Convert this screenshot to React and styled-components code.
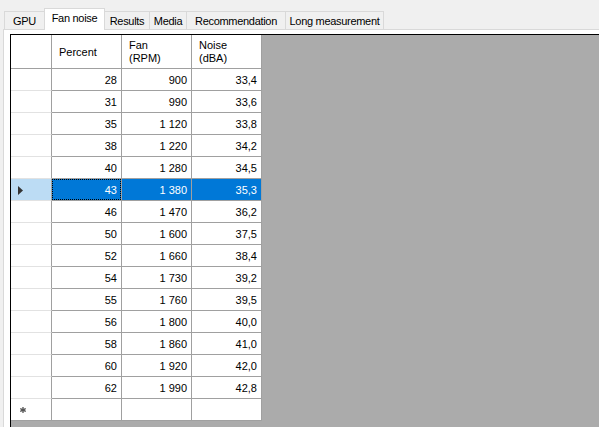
import React from "react";
import styled, { createGlobalStyle, css } from "styled-components";

const GlobalStyle = createGlobalStyle`
  html, body {
    margin: 0;
    padding: 0;
    background: #f0f0f0;
  }
  body {
    font-family: "Liberation Sans", Arial, sans-serif;
  }
`;

//Data
const tabs = [
  { label: "GPU", width: 41 },
  { label: "Fan noise", width: 61, active: true },
  { label: "Results", width: 46 },
  { label: "Media", width: 38 },
  { label: "Recommendation", width: 100 },
  { label: "Long measurement", width: 99 },
];

const rows = [
  [28, "900", "33,4"],
  [31, "990", "33,6"],
  [35, "1 120", "33,8"],
  [38, "1 220", "34,2"],
  [40, "1 280", "34,5"],
  [43, "1 380", "35,3"],
  [46, "1 470", "36,2"],
  [50, "1 600", "37,5"],
  [52, "1 660", "38,4"],
  [54, "1 730", "39,2"],
  [55, "1 760", "39,5"],
  [56, "1 800", "40,0"],
  [58, "1 860", "41,0"],
  [60, "1 920", "42,0"],
  [62, "1 990", "42,8"],
];

const SELECTED = 5;

const CurrentRowArrow = () => (
  <svg width="5" height="9" viewBox="0 0 5 9">
    <polygon points="0,0 5,4.5 0,9" fill="#333" />
  </svg>
);

const NewRowGlyph = () => (
  <svg width="6" height="6" viewBox="0 0 6 6">
    <g stroke="#555" strokeWidth="1.4" strokeLinecap="round">
      <line x1="3" y1="0.6" x2="3" y2="5.4" />
      <line x1="0.8" y1="1.8" x2="5.2" y2="4.2" />
      <line x1="0.8" y1="4.2" x2="5.2" y2="1.8" />
    </g>
  </svg>
);

const App = () => {
  return (
    <>
      <GlobalStyle />
      <Window>
        <TabStrip>
          {tabs.map((t) => (
            <Tab key={t.label} $width={t.width} $active={t.active}>
              {t.label}
            </Tab>
          ))}
        </TabStrip>
        <TabPage>
          <GridView>
            <Table>
              <HeaderCell $corner />
              <HeaderCell>Percent</HeaderCell>
              <HeaderCell>{"Fan\n(RPM)"}</HeaderCell>
              <HeaderCell>{"Noise\n(dBA)"}</HeaderCell>
              {rows.map((r, i) => (
                <React.Fragment key={r[0]}>
                  <RowHeader $selected={i === SELECTED}>
                    {i === SELECTED && <CurrentRowArrow />}
                  </RowHeader>
                  {r.map((v, j) => (
                    <Cell
                      key={j}
                      $selected={i === SELECTED}
                      $focused={i === SELECTED && j === 0}
                    >
                      {v}
                    </Cell>
                  ))}
                </React.Fragment>
              ))}
              <RowHeader $newRow>
                <NewRowGlyph />
              </RowHeader>
              <Cell />
              <Cell />
              <Cell />
            </Table>
          </GridView>
        </TabPage>
      </Window>
    </>
  );
};

const Window = styled.div`
  width: 599px;
  height: 427px;
  overflow: hidden;
  display: flex;
  flex-direction: column;
  background: #f0f0f0;
`;

const TabStrip = styled.div`
  height: 29px;
  flex: none;
  display: flex;
  align-items: flex-end;
  padding-left: 4px;
  box-sizing: border-box;
  position: relative;
  z-index: 1;
`;

const Tab = styled.div`
  width: ${(p) => p.$width}px;
  height: 18px;
  box-sizing: border-box;
  border: 1px solid #d9d9d9;
  border-bottom: none;
  margin-left: -1px;
  background: #f0f0f0;
  display: flex;
  align-items: center;
  justify-content: center;
  font-size: 11px;
  letter-spacing: -0.3px;
  color: #000;
  white-space: nowrap;
  padding-top: 1px;
  &:first-child {
    margin-left: 0;
  }
  ${(p) =>
    p.$active &&
    css`
      height: 22px;
      margin-bottom: -1px;
      background: #fff;
      padding-top: 0;
      padding-bottom: 3px;
      position: relative;
      z-index: 2;
    `}
`;

const TabPage = styled.div`
  flex: 1;
  display: flex;
  margin-left: 3px;
  border-top: 1px solid #d9d9d9;
  border-left: 1px solid #d9d9d9;
  background: #fff;
  padding: 4px 0 0 6px;
  min-height: 0;
`;

const GridView = styled.div`
  flex: 1;
  background: #ababab;
  border-left: 1px solid #000;
  border-top: 1px solid #000;
  overflow: hidden;
`;

const Table = styled.div`
  display: grid;
  grid-template-columns: 41px 70px 70px 70px;
  width: max-content;
  font-size: 11px;
  color: #000;
`;

const HeaderCell = styled.div`
  height: 34px;
  box-sizing: border-box;
  background: #fff;
  border-right: 1px solid #a0a0a0;
  border-bottom: 1px solid #a0a0a0;
  display: flex;
  align-items: center;
  padding: 1px 0 0 7px;
  line-height: 13px;
  white-space: pre-line;
`;

const RowHeader = styled.div`
  height: 22px;
  box-sizing: border-box;
  background: ${(p) => (p.$selected ? "#bcdcf4" : "#fff")};
  border-right: 1px solid #a0a0a0;
  border-bottom: 1px solid ${(p) => (p.$newRow ? "#a0a0a0" : "#e2e2e2")};
  display: flex;
  align-items: center;
  padding-left: ${(p) => (p.$newRow ? 9 : 7)}px;
  padding-top: 1px;
`;

const Cell = styled.div`
  height: 22px;
  box-sizing: border-box;
  position: relative;
  background: ${(p) => (p.$selected ? "#0078d7" : "#fff")};
  color: ${(p) => (p.$selected ? "#fff" : "#000")};
  border-right: 1px solid #a0a0a0;
  border-bottom: 1px solid #a0a0a0;
  display: flex;
  align-items: center;
  justify-content: flex-end;
  padding: 1px 4px 0 0;
  ${(p) =>
    p.$focused &&
    css`
      &::after {
        content: "";
        position: absolute;
        inset: 0;
        border: 1px dotted #000;
      }
    `}
`;

export default App;
